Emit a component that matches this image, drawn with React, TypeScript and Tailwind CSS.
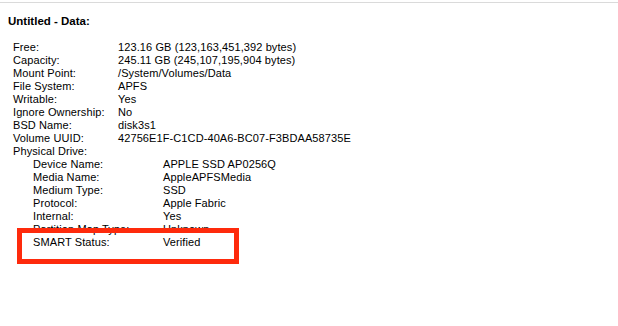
const volumeRows: [string, string][] = [
  ['Free:', '123.16 GB (123,163,451,392 bytes)'],
  ['Capacity:', '245.11 GB (245,107,195,904 bytes)'],
  ['Mount Point:', '/System/Volumes/Data'],
  ['File System:', 'APFS'],
  ['Writable:', 'Yes'],
  ['Ignore Ownership:', 'No'],
  ['BSD Name:', 'disk3s1'],
  ['Volume UUID:', '42756E1F-C1CD-40A6-BC07-F3BDAA58735E'],
];

const driveRows: [string, string][] = [
  ['Device Name:', 'APPLE SSD AP0256Q'],
  ['Media Name:', 'AppleAPFSMedia'],
  ['Medium Type:', 'SSD'],
  ['Protocol:', 'Apple Fabric'],
  ['Internal:', 'Yes'],
  ['Partition Map Type:', 'Unknown'],
  ['SMART Status:', 'Verified'],
];

export default function App() {
  return (
    <div
      className="relative h-[326px] w-full bg-white pt-[2px] text-[11px] leading-[13px] text-black"
      style={{ fontFamily: '"Liberation Sans", Arial, sans-serif' }}
    >
      <div className="border-t border-[#dadada]">
        <div className="ml-[8px] mt-[12px] text-[11.5px] font-bold">Untitled - Data:</div>

        {/* volume info */}
        <div className="ml-[13px] mt-[13px] grid grid-cols-[105px_1fr] tracking-[0.1px]">
          {volumeRows.map(([k, v]) => (
            <div key={k} className="contents">
              <div className="whitespace-nowrap">{k}</div>
              <div className="whitespace-nowrap">{v}</div>
            </div>
          ))}
          <div className="col-span-2">Physical Drive:</div>
        </div>

        <div className="ml-[33px] grid grid-cols-[130px_1fr] tracking-[0.1px]">
          {driveRows.map(([k, v]) => (
            <div key={k} className="contents">
              <div className="whitespace-nowrap">{k}</div>
              <div className="whitespace-nowrap">{v}</div>
            </div>
          ))}
        </div>
      </div>

      {/* annotation box */}
      <div className="absolute left-[17px] top-[228px] h-[36px] w-[222px] border-[5px] border-[#fe2a0c]" />
    </div>
  );
}
